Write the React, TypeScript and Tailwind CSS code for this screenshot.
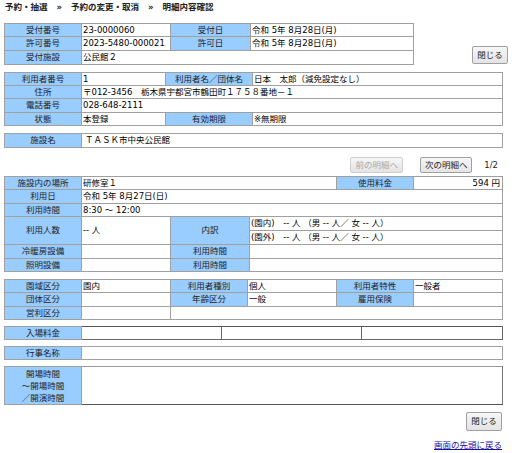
import type { ReactNode } from "react";

const FONT = { fontFamily: '"DejaVu Sans", "Noto Sans CJK JP", sans-serif' };

const lb = "border border-[#a0a0a0] bg-[#99ccff] text-center text-[#222] p-0 font-normal";
const vl = "border border-[#a0a0a0] bg-white text-left text-black p-0 pl-[1px] font-normal";

function L({ children, rowSpan, colSpan }: { children?: ReactNode; rowSpan?: number; colSpan?: number }) {
  return (
    <td className={lb} rowSpan={rowSpan} colSpan={colSpan}>
      {children}
    </td>
  );
}

function V({ children, rowSpan, colSpan, className = "" }: { children?: ReactNode; rowSpan?: number; colSpan?: number; className?: string }) {
  return (
    <td className={`${vl} ${className}`} rowSpan={rowSpan} colSpan={colSpan}>
      {children}
    </td>
  );
}

function Btn({ children, disabled = false, className = "" }: { children: ReactNode; disabled?: boolean; className?: string }) {
  return (
    <button
      className={[
        "rounded-[2px] border bg-gradient-to-b from-[#f6f6f6] to-[#e4e4e4] text-[8.5px] leading-none",
        disabled ? "border-[#cfcfcf] text-[#a8a8a8]" : "border-[#a0a0a0] text-[#222]",
        className,
      ].join(" ")}
    >
      {children}
    </button>
  );
}

function Cols({ w }: { w: number[] }) {
  return (
    <colgroup>
      {w.map((x, i) => (
        <col key={i} style={{ width: x }} />
      ))}
    </colgroup>
  );
}

const tbl = "table-fixed border-collapse text-[8.5px] leading-none";

export default function App() {
  return (
    <div className="min-h-[453px] w-[512px] bg-white px-[4px] text-black" style={FONT}>
      {/* パンくず */}
      <div className="flex h-[14px] items-center pl-[1px] text-[8.5px] font-bold text-[#222]">
        <span>予約・抽選</span>
        <span className="mx-[9px]">»</span>
        <span>予約の変更・取消</span>
        <span className="mx-[9px]">»</span>
        <span>明細内容確認</span>
      </div>

      {/* 受付情報 */}
      <div className="mt-[9px] flex items-end">
        <table className={`${tbl} w-[409px]`}>
          <Cols w={[77, 89, 80, 163]} />
          <tbody>
            <tr className="h-[13px]">
              <L>受付番号</L>
              <V>23-0000060</V>
              <L>受付日</L>
              <V>令和 5年 8月28日(月)</V>
            </tr>
            <tr className="h-[14px]">
              <L>許可番号</L>
              <V>2023-5480-000021</V>
              <L>許可日</L>
              <V>令和 5年 8月28日(月)</V>
            </tr>
            <tr className="h-[14px]">
              <L>受付施設</L>
              <V colSpan={3}>公民館２</V>
            </tr>
          </tbody>
        </table>
        <Btn className="mb-[1px] ml-auto h-[18px] w-[36px]">閉じる</Btn>
      </div>

      {/* 利用者情報 */}
      <table className={`${tbl} mt-[7px] w-[498px]`}>
        <Cols w={[77, 84, 87, 250]} />
        <tbody>
          <tr className="h-[13px]">
            <L>利用者番号</L>
            <V>1</V>
            <L>利用者名／団体名</L>
            <V>日本　太郎（減免設定なし）</V>
          </tr>
          <tr className="h-[13px]">
            <L>住所</L>
            <V colSpan={3}>〒012-3456　栃木県宇都宮市鶴田町１７５８番地－１</V>
          </tr>
          <tr className="h-[14px]">
            <L>電話番号</L>
            <V colSpan={3}>028-648-2111</V>
          </tr>
          <tr className="h-[13px]">
            <L>状態</L>
            <V>本登録</V>
            <L>有効期限</L>
            <V>※無期限</V>
          </tr>
        </tbody>
      </table>

      {/* 施設名 */}
      <table className={`${tbl} mt-[7px] w-[498px]`}>
        <Cols w={[77, 421]} />
        <tbody>
          <tr className="h-[14px]">
            <L>施設名</L>
            <V className="pl-[3px]">ＴＡＳＫ市中央公民館</V>
          </tr>
        </tbody>
      </table>

      {/* 明細ナビ */}
      <div className="mt-[9px] flex items-center justify-end pr-[10px]">
        <Btn disabled className="h-[16px] w-[53px]">前の明細へ</Btn>
        <Btn className="ml-[17px] h-[16px] w-[52px]">次の明細へ</Btn>
        <span className="ml-[12px] text-[8.5px] text-[#222]">1/2</span>
      </div>

      {/* 明細 */}
      <table className={`${tbl} mt-[3px] w-[498px]`}>
        <Cols w={[77, 89, 79, 87, 77, 89]} />
        <tbody>
          <tr className="h-[13px]">
            <L>施設内の場所</L>
            <V colSpan={3}>研修室１</V>
            <L>使用料金</L>
            <V className="pr-[2px] text-right">594 円</V>
          </tr>
          <tr className="h-[14px]">
            <L>利用日</L>
            <V colSpan={5}>令和 5年 8月27日(日)</V>
          </tr>
          <tr className="h-[13px]">
            <L>利用時間</L>
            <V colSpan={5}>8:30 ～ 12:00</V>
          </tr>
          <tr className="h-[14px]">
            <L rowSpan={2}>利用人数</L>
            <V rowSpan={2}>-- 人</V>
            <L rowSpan={2}>内訳</L>
            <V colSpan={3}>(園内)　-- 人 （男 -- 人／ 女 -- 人）</V>
          </tr>
          <tr className="h-[14px]">
            <V colSpan={3}>(園外)　-- 人 （男 -- 人／ 女 -- 人）</V>
          </tr>
          <tr className="h-[14px]">
            <L>冷暖房設備</L>
            <V />
            <L>利用時間</L>
            <V colSpan={3} />
          </tr>
          <tr className="h-[13px]">
            <L>照明設備</L>
            <V />
            <L>利用時間</L>
            <V colSpan={3} />
          </tr>
        </tbody>
      </table>

      {/* 区分 */}
      <table className={`${tbl} mt-[7px] w-[498px]`}>
        <Cols w={[77, 89, 77, 89, 77, 89]} />
        <tbody>
          <tr className="h-[13px]">
            <L>園域区分</L>
            <V>園内</V>
            <L>利用者種別</L>
            <V>個人</V>
            <L>利用者特性</L>
            <V>一般者</V>
          </tr>
          <tr className="h-[14px]">
            <L>団体区分</L>
            <V />
            <L>年齢区分</L>
            <V>一般</V>
            <L>雇用保険</L>
            <V />
          </tr>
          <tr className="h-[13px]">
            <L>営利区分</L>
            <V />
            <V colSpan={4} />
          </tr>
        </tbody>
      </table>

      {/* 入場料金 */}
      <table className={`${tbl} mt-[6px] w-[498px]`}>
        <Cols w={[77, 140, 140, 141]} />
        <tbody>
          <tr className="h-[13px]">
            <L>入場料金</L>
            <td className="border border-[#a0a0a0] border-r-[#666] border-t-[#555] border-b-[#666] bg-white p-0" />
            <td className="border border-[#666] border-t-[#555] bg-white p-0" />
            <td className="border border-[#666] border-t-[#555] bg-white p-0" />
          </tr>
        </tbody>
      </table>

      {/* 行事名称 */}
      <table className={`${tbl} mt-[6px] w-[498px]`}>
        <Cols w={[77, 421]} />
        <tbody>
          <tr className="h-[13px]">
            <L>行事名称</L>
            <V />
          </tr>
        </tbody>
      </table>

      {/* 開場時間 */}
      <table className={`${tbl} mt-[6px] w-[498px]`}>
        <Cols w={[77, 421]} />
        <tbody>
          <tr className="h-[38px]">
            <td className={`${lb} leading-[12px]`}>
              開場時間
              <br />
              ～開場時間
              <br />
              ／開演時間
            </td>
            <td className="border border-[#a0a0a0] border-t-[#999] border-r-[#777] border-b-[#555] bg-white p-0" />
          </tr>
        </tbody>
      </table>

      <div className="mt-[7px] flex justify-end pr-[6px]">
        <Btn className="h-[19px] w-[36px]">閉じる</Btn>
      </div>
      <div className="mt-[10px] flex justify-end pr-[6px]">
        <a href="#" className="text-[8.5px] leading-none text-[#1a0dab] underline">
          画面の先頭に戻る
        </a>
      </div>
    </div>
  );
}
